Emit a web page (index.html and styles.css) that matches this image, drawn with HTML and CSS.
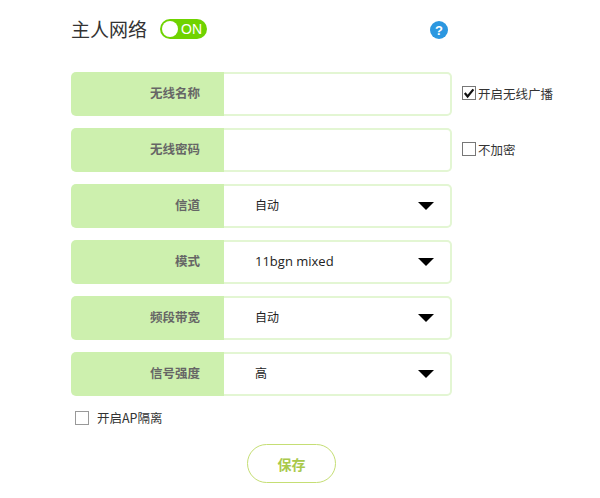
FILE: index.html
```html
<!DOCTYPE html>
<html lang="zh">
<head>
<meta charset="utf-8">
<title>主人网络</title>
<link rel="stylesheet" href="styles.css">
</head>
<body>
<main class="page">
  <header class="head">
    <h1 class="title">主人网络</h1>
    <div class="switch"><span class="knob"></span><span class="on">ON</span></div>
    <svg class="help" viewBox="0 0 18 18" width="18" height="18"><circle cx="9" cy="9" r="9" fill="#2b97e0"/><text x="9" y="13.6" text-anchor="middle" class="help-q">?</text></svg>
  </header>
  <div class="rows">
    <div class="row">
      <div class="field"><div class="label">无线名称</div><div class="value"></div></div>
      <div class="check side"><span class="box"><svg viewBox="0 0 12 12" width="12" height="12"><path d="M1.8 6 L4.6 9.4 L10.4 2.4" fill="none" stroke="#111" stroke-width="2.2"/></svg></span><span>开启无线广播</span></div>
    </div>
    <div class="row">
      <div class="field"><div class="label">无线密码</div><div class="value"></div></div>
      <div class="check side"><span class="box"></span><span>不加密</span></div>
    </div>
    <div class="row">
      <div class="field"><div class="label">信道</div><div class="value"><span>自动</span><i class="arrow"></i></div></div>
    </div>
    <div class="row">
      <div class="field"><div class="label">模式</div><div class="value"><span class="latin">11bgn mixed</span><i class="arrow"></i></div></div>
    </div>
    <div class="row">
      <div class="field"><div class="label">频段带宽</div><div class="value"><span>自动</span><i class="arrow"></i></div></div>
    </div>
    <div class="row">
      <div class="field"><div class="label">信号强度</div><div class="value"><span>高</span><i class="arrow"></i></div></div>
    </div>
  </div>
  <div class="check ap"><span class="box"></span><span>开启AP隔离</span></div>
  <div class="actions"><button class="save" type="button">保存</button></div>
</main>
</body>
</html>
```
FILE: styles.css
```css
* { box-sizing: border-box; }
html, body { margin: 0; padding: 0; background: #fff; }
body {
  width: 600px;
  height: 498px;
  overflow: hidden;
  font-family: "Noto Sans CJK SC", sans-serif;
  font-size: 12.5px;
  color: #333;
}
.page { padding: 14px 0 0 71px; }
.head { display: flex; align-items: center; height: 30px; width: 377px; }
.title { margin: 0; font-size: 19px; font-weight: 400; color: #333; line-height: 30px; }
.switch {
  margin-left: 13px;
  width: 47px;
  height: 20px;
  border-radius: 10px;
  background: #6fd300;
  display: flex;
  align-items: center;
  padding-left: 2px;
}
.knob { width: 16px; height: 16px; border-radius: 50%; background: #fff; }
.on { margin-left: 3px; color: #fff; font-size: 14px; font-family: "Liberation Sans", sans-serif; }
.help { margin-left: auto; margin-top: 2px; }
.help-q { fill: #fff; font: 700 13px "Liberation Sans", sans-serif; }
.rows { display: flex; flex-direction: column; gap: 12px; margin-top: 28px; }
.row { display: flex; align-items: center; }
.field { display: flex; width: 381px; height: 44px; }
.label {
  width: 153px;
  background: #cdf0ae;
  border-radius: 5px 0 0 5px;
  text-align: right;
  padding-right: 24px;
  line-height: 41px;
  font-weight: 700;
  font-size: 12.5px;
  color: #666;
}
.value {
  flex: 1;
  display: flex;
  align-items: center;
  justify-content: space-between;
  padding: 0 16px 3px 31px;
  border: 2px solid #e3f6d3;
  border-left: 0;
  border-radius: 0 5px 5px 0;
  color: #222;
  font-size: 12px;
}
.latin { font-family: "Open Sans", sans-serif; font-size: 13px; }
.arrow { width: 0; height: 0; border-left: 8.5px solid transparent; border-right: 8.5px solid transparent; border-top: 8px solid #000; margin-top: 2px; }
.check { display: flex; align-items: center; gap: 2px; color: #333; }
.side { margin-left: 10px; padding-bottom: 2px; }
.box {
  width: 14px;
  height: 14px;
  border: 1px solid #777;
  background: #fff;
  display: flex;
  align-items: center;
  justify-content: center;
}
.box svg { display: block; flex: none; }
.ap { margin: 12px 0 0 4px; gap: 8px; }
.ap .box { border-width: 1.5px; border-color: #999; }
.actions { margin-top: 17px; padding-left: 176px; }
.save {
  display: block;
  width: 89px;
  height: 39px;
  border: 1.5px solid #c5de74;
  border-radius: 20px;
  background: #fff;
  color: #a9c94b;
  font: 700 14px "Noto Sans CJK SC", sans-serif;
  padding: 0;
}
```
